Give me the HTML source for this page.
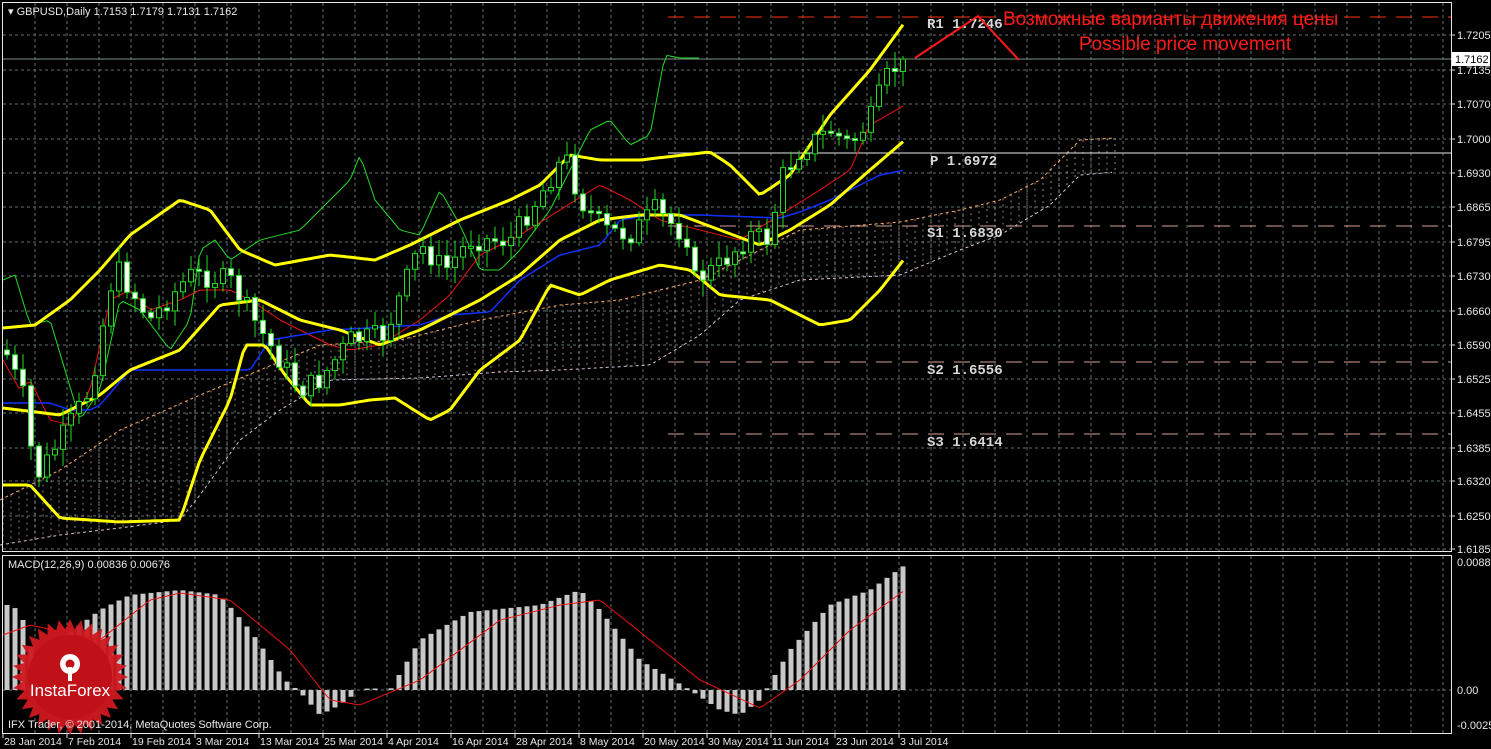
<!DOCTYPE html>
<html><head><meta charset="utf-8">
<style>
html,body{margin:0;padding:0;background:#000;}
body{width:1491px;height:749px;overflow:hidden;position:relative;font-family:"Liberation Sans",sans-serif;}
svg{position:absolute;left:0;top:0;}
text{font-family:"Liberation Sans",sans-serif;}
.mono{font-family:"Liberation Mono",monospace;font-weight:bold;}
</style></head><body>
<svg id="s" width="1491" height="749" xmlns="http://www.w3.org/2000/svg">
<rect x="0" y="0" width="1491" height="749" fill="#000"/>
<g id="grid"></g>
<g id="cloud"></g>
<g id="lvl">
  <line x1="668" y1="17" x2="1451" y2="17" stroke="#ff3010" stroke-width="1" stroke-dasharray="16,10"/>
  <line x1="668" y1="153" x2="1451" y2="153" stroke="#e8e8e8" stroke-width="1"/>
  <line x1="668" y1="226" x2="1451" y2="226" stroke="#d2a090" stroke-width="1" stroke-dasharray="16,10"/>
  <line x1="668" y1="362" x2="1451" y2="362" stroke="#d2a090" stroke-width="1" stroke-dasharray="16,10"/>
  <line x1="668" y1="434" x2="1451" y2="434" stroke="#d2a090" stroke-width="1" stroke-dasharray="16,10"/>
  <line x1="2" y1="59" x2="1451" y2="59" stroke="#7a9080" stroke-width="1"/>
  <text x="927" y="28" fill="#d8d8d8" font-size="14" class="mono">R1 1.7246</text>
  <text x="930" y="165" fill="#d8d8d8" font-size="14" class="mono">P 1.6972</text>
  <text x="927" y="237" fill="#d8d8d8" font-size="14" class="mono">S1 1.6830</text>
  <text x="927" y="374" fill="#d8d8d8" font-size="14" class="mono">S2 1.6556</text>
  <text x="927" y="446" fill="#d8d8d8" font-size="14" class="mono">S3 1.6414</text>
</g>
<g id="ind"></g>
<g id="candles"></g>
<g id="macd"></g>
<polyline points="915,58 978,16 1019,60" fill="none" stroke="#ff1a1a" stroke-width="2"/>
<text x="1003" y="25" fill="#ff1a1a" font-size="19">Возможные варианты движения цены</text>
<text x="1185" y="50" fill="#ff1a1a" font-size="19" text-anchor="middle">Possible price movement</text>
<rect x="2.5" y="2.5" width="1449" height="549" fill="none" stroke="#e8e8e8"/>
<rect x="2.5" y="555.5" width="1449" height="178" fill="none" stroke="#e8e8e8"/>
<rect x="1452" y="52" width="38" height="14" fill="#fff"/>
<text x="1455" y="63" fill="#000" font-size="11">1.7162</text>
<g id="axis"></g>
<text x="8" y="15" fill="#e8e8e8" font-size="11">▾ GBPUSD,Daily  1.7153 1.7179 1.7131 1.7162</text>
<text x="8" y="568" fill="#e8e8e8" font-size="11">MACD(12,26,9) 0.00836 0.00676</text>
<g transform="translate(70,677)">
  <polygon id="star" fill="#d01820" opacity="0.95"/>
  <circle r="42" fill="#c01018"/>
  <g fill="#fff">
    <circle cx="0" cy="-13" r="10"/>
    <circle cx="0" cy="-13" r="4.5" fill="#c01018"/>
    <rect x="-2" y="-10" width="4" height="14"/>
  </g>
  <text x="0" y="19" fill="#fff" font-size="17" text-anchor="middle">InstaForex</text>
</g>
<text x="8" y="728" fill="#e8e8e8" font-size="11">IFX Trader, © 2001-2014, MetaQuotes Software Corp.</text>
</svg>
<script>
var NS="http://www.w3.org/2000/svg";
function el(p,t,a){var e=document.createElementNS(NS,t);for(var k in a)e.setAttribute(k,a[k]);document.getElementById(p).appendChild(e);return e;}
function interp(P,x){if(x<=P[0][0])return P[0][1];for(var i=1;i<P.length;i++){if(x<=P[i][0]){var a=P[i-1],b=P[i];return a[1]+(b[1]-a[1])*(x-a[0])/(b[0]-a[0]);}}return P[P.length-1][1];}
function poly(P,x0,x1,step){var s=[];for(var x=x0;x<=x1;x+=step)s.push(x+","+interp(P,x).toFixed(1));return s.join(" ");}
var seed=7;function rnd(){seed=(seed*9301+49297)%233280;return seed/233280;}
for(var x=35;x<1451;x+=32)el("grid","line",{x1:x,y1:3,x2:x,y2:551,stroke:"#607070","stroke-dasharray":"3,3"});
for(var x=35;x<1451;x+=32)el("grid","line",{x1:x,y1:556,x2:x,y2:733,stroke:"#607070","stroke-dasharray":"3,3"});
var py=[[1.7205,35],[1.7135,70],[1.7070,104],[1.7000,139],[1.6930,173],[1.6865,207],[1.6795,242],[1.6730,276],[1.6660,311],[1.6590,345],[1.6525,379],[1.6455,413],[1.6385,448],[1.6320,481],[1.6250,516],[1.6185,549]];
py.forEach(function(p){el("grid","line",{x1:3,y1:p[1],x2:1451,y2:p[1],stroke:"#607070","stroke-dasharray":"3,3"});
 el("axis","line",{x1:1451,y1:p[1],x2:1455,y2:p[1],stroke:"#ddd"});
 var t=el("axis","text",{x:1457,y:p[1]+4,fill:"#e8e8e8","font-size":"11"});t.textContent=p[0].toFixed(4);});
el("grid","line",{x1:3,y1:690,x2:1451,y2:690,stroke:"#607070","stroke-dasharray":"3,3"});
[["0.00888",562],["0.00",690],["-0.00251",725]].forEach(function(p){var t=el("axis","text",{x:1457,y:p[1]+4,fill:"#e8e8e8","font-size":"11"});t.textContent=p[0];});
var dates=["28 Jan 2014","7 Feb 2014","19 Feb 2014","3 Mar 2014","13 Mar 2014","25 Mar 2014","4 Apr 2014","16 Apr 2014","28 Apr 2014","8 May 2014","20 May 2014","30 May 2014","11 Jun 2014","23 Jun 2014","3 Jul 2014"];
dates.forEach(function(d,i){var x=3+64*i;el("axis","line",{x1:x,y1:734,x2:x,y2:738,stroke:"#ddd"});var t=el("axis","text",{x:x+1,y:745,fill:"#e8e8e8","font-size":"10.5"});t.textContent=d;});
var cTop=[[0,500],[60,470],[120,430],[200,395],[260,370],[320,345],[400,340],[480,320],[560,305],[620,300],[700,280],[760,250],[800,230],[900,222],[960,210],[1000,200],[1040,180],[1080,140],[1115,138]];
var cBot=[[0,545],[60,535],[120,528],[180,520],[200,495],[240,440],[280,410],[330,380],[420,378],[500,372],[560,370],[650,365],[700,335],[740,300],[800,280],[900,275],[960,250],[1000,235],[1050,205],[1080,175],[1115,172]];
el("cloud","polyline",{points:poly(cTop,0,1115,4),fill:"none",stroke:"#f4a460","stroke-dasharray":"3,3"});
el("cloud","polyline",{points:poly(cBot,0,1115,4),fill:"none",stroke:"#d8bfd8","stroke-dasharray":"3,3"});
for(var x=3;x<=1115;x+=8)el("cloud","line",{x1:x,y1:interp(cTop,x),x2:x,y2:interp(cBot,x),stroke:"#e8c8b0","stroke-width":"0.8","stroke-dasharray":"2,4",opacity:"0.8"});
var bu=[[3,328],[35,325],[70,300],[100,270],[130,235],[180,200],[210,210],[240,250],[275,265],[330,255],[375,260],[410,245],[460,220],[510,200],[540,185],[570,155],[600,160],[640,160],[710,152],[730,165],[760,195],[790,175],[830,115],[870,70],[905,22]];
var bl=[[3,485],[30,485],[60,518],[120,522],[180,520],[200,460],[230,400],[245,345],[265,345],[285,375],[310,405],[340,405],[370,400],[395,398],[430,420],[450,410],[480,370],[520,340],[550,285],[580,295],[610,280],[660,265],[690,270],[720,295],[770,300],[820,325],[850,320],[880,290],[905,258]];
var bm=[[3,408],[60,415],[100,395],[130,370],[180,350],[220,305],[260,300],[300,320],[340,330],[380,345],[420,330],[480,300],[520,275],[560,240],[600,220],[640,215],[680,215],[720,230],[760,245],[790,230],[830,205],[870,170],[905,140]];
var kij=[[3,403],[50,403],[70,410],[90,410],[100,405],[130,370],[250,370],[270,340],[330,330],[420,325],[450,315],[490,312],[520,280],[560,255],[600,245],[620,220],[650,215],[700,215],[780,218],[800,212],[830,200],[880,175],[905,170]];
var ten=[[3,360],[20,390],[30,380],[50,420],[70,425],[90,390],[110,300],[130,290],[150,310],[180,300],[200,290],[230,290],[250,300],[280,320],[300,330],[330,345],[350,350],[380,345],[420,320],[450,295],[480,255],[520,235],[560,210],[600,185],[630,200],[660,220],[700,230],[740,240],[780,215],[820,190],[850,170],[870,125],[905,105]];
var chi=[[3,280],[15,275],[30,325],[50,320],[80,420],[100,390],[120,300],[140,310],[170,350],[190,320],[200,250],[215,240],[230,260],[260,240],[300,230],[330,200],[350,180],[360,155],[375,200],[400,230],[420,235],[440,190],[460,225],[480,270],[500,270],[520,250],[550,210],[570,170],[590,130],[610,120],[630,145],[650,135],[665,55],[680,58],[700,58]];
el("ind","polyline",{points:poly(chi,3,700,4),fill:"none",stroke:"#22dd22","stroke-width":1});
el("ind","polyline",{points:poly(ten,3,905,4),fill:"none",stroke:"#ee1111","stroke-width":1});
el("ind","polyline",{points:poly(kij,3,905,4),fill:"none",stroke:"#1030ff","stroke-width":1.5});
[bu,bl,bm].forEach(function(b){el("ind","polyline",{points:poly(b,3,905,4),fill:"none",stroke:"#ffff00","stroke-width":3});});
var cl=[[7,355],[25,400],[35,480],[60,440],[90,390],[115,265],[150,320],[190,275],[230,280],[260,330],[300,390],[320,380],[350,340],[385,335],[420,245],[445,270],[470,240],[510,240],[540,195],[565,155],[580,200],[605,230],[630,235],[655,210],[690,240],[695,280],[720,265],[750,235],[770,240],[780,180],[800,150],[830,130],[850,145],[870,120],[885,80],[903,58]];
var prev=350;
for(var i=0;i<=112;i++){var x=7+8*i;var c=interp(cl,x)+(rnd()-0.5)*22;if(i==112)c=59;var o=prev;
 var hi=Math.min(o,c)-3-rnd()*14, lo=Math.max(o,c)+3+rnd()*14;
 el("candles","line",{x1:x,y1:hi,x2:x,y2:lo,stroke:"#22dd22"});
 var t=Math.min(o,c),h=Math.max(2,Math.abs(o-c));
 el("candles","rect",{x:x-2.5,y:t,width:5,height:h,fill:(c>o?"#fff":"#000"),stroke:"#22dd22"});
 prev=c;}
var mh=[[7,605],[20,610],[35,660],[60,640],[100,610],[130,595],[180,590],[220,595],[250,630],[285,680],[300,692],[320,715],[340,705],[360,690],[370,688],[390,690],[420,640],[470,612],[540,605],[580,590],[600,610],[640,660],[690,690],[720,710],[740,715],[760,700],[790,650],[830,605],[870,590],[905,565]];
for(var i=0;i<=112;i++){var x=7+8*i;var y=interp(mh,x);if(Math.abs(y-690)<1)continue;
 el("macd","rect",{x:x-2.5,y:Math.min(y,690),width:5,height:Math.abs(y-690),fill:"#c8c8c8"});}
var sg=[[3,635],[30,625],[100,640],[150,600],[180,593],[230,600],[290,650],[330,700],[360,705],[420,680],[500,620],[560,605],[600,600],[650,640],[700,680],[760,708],[800,680],[850,630],[905,590]];
el("macd","polyline",{points:poly(sg,3,905,4),fill:"none",stroke:"#ee1111","stroke-width":1});
var pts=[];for(var k=0;k<64;k++){var a=k*Math.PI/32,r=(k%2)?48:58;pts.push((r*Math.cos(a)).toFixed(1)+","+(r*Math.sin(a)).toFixed(1));}
document.getElementById("star").setAttribute("points",pts.join(" "));
</script>
</body></html>
